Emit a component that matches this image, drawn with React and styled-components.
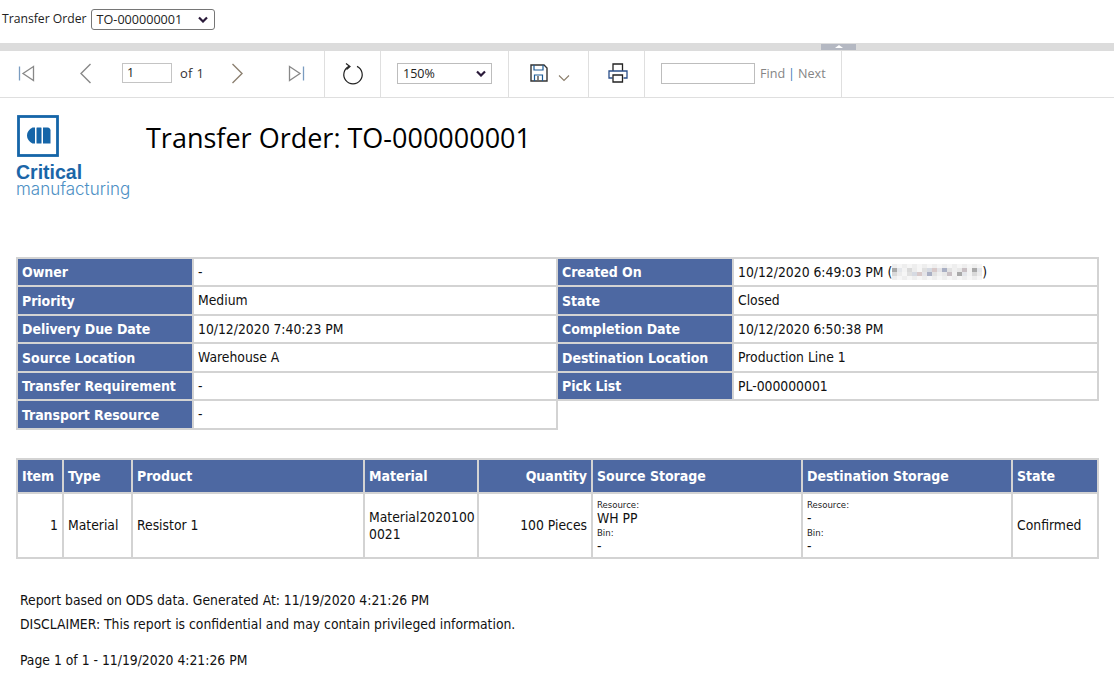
import React from "react";
import styled, { createGlobalStyle } from "styled-components";

const Global = createGlobalStyle`
  html, body { margin: 0; padding: 0; background: #fff; }
  body { font-family: "Open Sans", "Noto Sans", sans-serif; color: #000; }
`;
const Page = styled.div`width: 1114px; height: 698px; overflow: hidden; display: flex; flex-direction: column;`;
const ParamBar = styled.div`height: 43px; box-sizing: border-box; padding: 9px 0 0 2px; display: flex; align-items: flex-start; gap: 4px; font-size: 12.2px; color: #222;`;
const ParamLabel = styled.span`line-height: 20px;`;
const ParamSelect = styled.div`
  width: 124px; height: 21px; box-sizing: border-box; border: 1px solid #767676; border-radius: 3px;
  display: flex; align-items: center; justify-content: space-between; padding: 0 6px 0 5px; font-size: 12.6px;
`;
const Splitter = styled.div`height: 8px; background: #dcdcdc; position: relative; flex: none;`;
const Handle = styled.div`
  position: absolute; left: 821px; top: 1px; width: 35px; height: 6px; background: #b4b8c2;
  display: flex; justify-content: center; align-items: flex-start;
  &::after { content: ""; border-left: 4px solid transparent; border-right: 4px solid transparent; border-bottom: 3px solid #fff; margin-top: 1px; }
`;
const Toolbar = styled.div`height: 47px; box-sizing: border-box; border-bottom: 1px solid #dfdfdf; display: flex; flex: none; font-size: 12.5px; color: #333;`;
const Group = styled.div`
  width: ${p => p.$w}px; box-sizing: border-box; border-right: 1px solid #dfdfdf; position: relative;
  display: flex; align-items: center; padding-bottom: 2px;
  padding-left: ${p => p.$pl || 0}px; gap: ${p => p.$gap || 0}px;
`;
const PageInput = styled.div`width: 50px; height: 20px; box-sizing: border-box; border: 1px solid #c4c4c4; padding-left: 4px; line-height: 18px; color: #222;`;
const OfText = styled.span`color: #333; font-size: 13px; letter-spacing: .3px;`;
const ZoomSelect = styled.div`
  width: 95px; height: 21px; box-sizing: border-box; border: 1px solid #bdbdbd;
  display: flex; align-items: center; justify-content: space-between; padding: 0 5px 0 5px; font-size: 12.5px; color: #222;
`;
const FindInput = styled.div`width: 94px; height: 21px; box-sizing: border-box; border: 1px solid #bdbdbd;`;
const FindLinks = styled.span`color: #858585; font-size: 12.6px; display: flex; gap: 3px;`;
const Pipe = styled.span`color: #3a7ab8;`;
const Report = styled.div`flex: 1; position: relative; padding: 0 16px;`;
const Head = styled.div`height: 159px; display: flex; padding-top: 17px; box-sizing: border-box;`;
const Logo = styled.div`width: 130px; flex: none; display: flex; flex-direction: column; font-family: "Liberation Sans", sans-serif;`;
const LogoMark = styled.svg`display: block; margin-left: 1px; margin-bottom: 7px;`;
const LogoBold = styled.div`color: #1b66a8; font-weight: 700; font-size: 19.5px; line-height: 17px;`;
const LogoThin = styled.div`color: #4d8fc4; font-family: "Inter", sans-serif; font-weight: 300; font-size: 17px; line-height: 17px;`;
const Title = styled.h1`margin: 7px 0 0; font-family: "Open Sans", sans-serif; font-weight: 400; font-size: 27px; line-height: 32px; color: #000;`;
const Table = styled.table`
  border-collapse: collapse; table-layout: fixed; width: ${p => p.$w}px;
  font-family: "DejaVu Sans Condensed", "DejaVu Sans", sans-serif; font-size: 13.8px;
`;
const Label = styled.th`
  background: #4d68a2; color: #fff; border: 2px solid #d3d3d3; height: ${p => p.$h}px; padding: 0 4px;
  font-size: 14px; font-weight: 700; text-align: ${p => p.$right ? "right" : "left"};
  white-space: nowrap; overflow: hidden; letter-spacing: -.05px;
`;
const Cell = styled.td`
  border: 2px solid #d3d3d3; padding: 0 4px; height: ${p => p.$h}px; color: #111;
  text-align: ${p => p.$right ? "right" : "left"}; line-height: 17px;
`;
const BlankCell = styled.td`border: none; border-top: 2px solid #d3d3d3;`;
const ItemsWrap = styled.div`margin-top: 28px;`;
const Tiny = styled.div`font-size: 9.5px; line-height: 11px; color: #222;`;
const StoreVal = styled.div`font-size: 13.8px; line-height: 17px; color: #111;`;
const Stack = styled.div`padding: 4px 0 1px;`;
const Notes = styled.div`margin: 29px 0 0 4px; font-family: "DejaVu Sans Condensed", "DejaVu Sans", sans-serif; font-size: 13.8px; color: #111; line-height: 24px;`;
const PageNote = styled.div`margin-top: 12px;`;
const Redact = styled.svg`display: inline-block; vertical-align: -3px; margin: 0;`;

const Stroke = { fill: "none", stroke: "#888", strokeWidth: 1.3 };
const IconBox = styled.svg`display: block; flex: none; position: absolute; left: ${p => p.$x}px; top: ${p => p.$y}px;`;

const Chevron = () => (
  <svg width="10" height="7" viewBox="0 0 10 7"><path d="M1 1.5 5 5.5 9 1.5" fill="none" stroke="#2a1a3a" strokeWidth="2.2" /></svg>
);

const Blur = () => {
  const c = ["#e8e8e8","#c9c0c4","#f2f2f2","#a9a9a9","#e4e6ea","#f3f3f3","#d9d9d9","#ececec","#f6f6f6","#e0e0e0","#d6dae2","#d8c9c9","#e4e4e8","#aab0c4","#e2e2e2","#efefef"];
  const cells = [];
  for (let r = 0; r < 4; r++) for (let i = 0; i < 18; i++) {
    cells.push(<rect key={r + "-" + i} x={i * 5} y={r * 4} width="5" height="4" fill={r === 0 || r === 3 ? (i % 2 ? "#f6f6f6" : "#eeeeee") : c[(i + r * 3) % 16]} />);
  }
  return <Redact width="90" height="16" viewBox="0 0 90 16">{cells}</Redact>;
};

const details = [
  ["Owner", "-", "Created On", <>10/12/2020 6:49:03 PM (<Blur />)</>],
  ["Priority", "Medium", "State", "Closed"],
  ["Delivery Due Date", "10/12/2020 7:40:23 PM", "Completion Date", "10/12/2020 6:50:38 PM"],
  ["Source Location", "Warehouse A", "Destination Location", "Production Line 1"],
  ["Transfer Requirement", "-", "Pick List", "PL-000000001"],
];

const Storage = ({ value }) => (
  <Stack>
    <Tiny>Resource:</Tiny>
    <StoreVal>{value}</StoreVal>
    <Tiny>Bin:</Tiny>
    <StoreVal>-</StoreVal>
  </Stack>
);

export default function App() {
  return (
    <Page>
      <Global />
      <ParamBar>
        <ParamLabel>Transfer Order</ParamLabel>
        <ParamSelect>TO-000000001<Chevron /></ParamSelect>
      </ParamBar>
      <Splitter><Handle /></Splitter>
      <Toolbar>
        <Group $w={325} $pl={122} $gap={8}>
          <IconBox $x={18} $y={14} width="18" height="17" viewBox="0 0 18 17"><path d="M1.5 1.5v14" {...Stroke} stroke="#7a9cc0" /><path d="M15.5 1.5 5 8.5l10.5 7z" {...Stroke} /></IconBox>
          <IconBox $x={79} $y={12} width="13" height="21" viewBox="0 0 13 21"><path d="M11.5 1 2 10.5 11.5 20" {...Stroke} strokeWidth="1.4" /></IconBox>
          <PageInput>1</PageInput>
          <OfText>of 1</OfText>
          <IconBox $x={231} $y={12} width="13" height="21" viewBox="0 0 13 21"><path d="M1.5 1 11 10.5 1.5 20" {...Stroke} stroke="#8c8070" strokeWidth="1.4" /></IconBox>
          <IconBox $x={287} $y={14} width="18" height="17" viewBox="0 0 18 17"><path d="M2.5 1.5 13 8.5 2.5 15.5z" {...Stroke} /><path d="M16.5 1.5v14" {...Stroke} stroke="#7a9cc0" /></IconBox>
        </Group>
        <Group $w={56}>
          <IconBox $x={17} $y={11} width="22" height="23" viewBox="0 0 22 23"><path d="M7 4.4a9.2 9.2 0 1 0 8 0" fill="none" stroke="#222" strokeWidth="1.2" /><path d="M4 1.5 8 4.5 4.5 7.5" fill="none" stroke="#222" strokeWidth="1.2" /></IconBox>
        </Group>
        <Group $w={128} $pl={16}>
          <ZoomSelect>150%<Chevron /></ZoomSelect>
        </Group>
        <Group $w={80}>
          <IconBox $x={21} $y={13} width="18" height="18" viewBox="0 0 18 18"><path d="M1 1h13l3 3v13H1z" fill="none" stroke="#333" strokeWidth="1.4" /><path d="M4 1v5h9V1M4.5 17v-6h8v6" fill="none" stroke="#1c5b96" strokeWidth="1.2" /><path d="M8 12v4" stroke="#333" strokeWidth="1.2" /></IconBox>
          <IconBox $x={49} $y={23} width="12" height="8" viewBox="0 0 12 8"><path d="M1 1.5 6 6.5 11 1.5" fill="none" stroke="#8a7d6a" strokeWidth="1.1" /></IconBox>
        </Group>
        <Group $w={56}>
          <IconBox $x={19} $y={12} width="20" height="20" viewBox="0 0 20 20"><path d="M5 8V1h9.500v7" fill="none" stroke="#222" strokeWidth="1.300" /><path d="M4.500 15H1V8h18v7h-3.500" fill="none" stroke="#2a4f8a" strokeWidth="1.300" /><path d="M5 12h9.500v7H5z" fill="#fff" stroke="#222" strokeWidth="1.300" /></IconBox>
        </Group>
        <Group $w={197} $pl={16} $gap={5}>
          <FindInput />
          <FindLinks><span>Find</span><Pipe>|</Pipe><span>Next</span></FindLinks>
        </Group>
      </Toolbar>
      <Report>
        <Head>
          <Logo>
            <LogoMark width="42" height="42" viewBox="0 0 42 42">
              <rect x="1.500" y="1.500" width="39" height="39" fill="none" stroke="#1565a8" strokeWidth="2.800" />
              <path d="M15.500 12.500h2.500v16h-2.500c-3.500-2-5.500-4.500-5.500-8s2-6 5.500-8z" fill="#1565a8" />
              <rect x="19.500" y="12.500" width="5" height="16" rx=".5" fill="#1565a8" />
              <path d="M26 12.500h4.500c2 0 3 1.500 3 3v13H26z" fill="#1565a8" />
            </LogoMark>
            <LogoBold>Critical</LogoBold>
            <LogoThin>manufacturing</LogoThin>
          </Logo>
          <Title>Transfer Order: TO-000000001</Title>
        </Head>
        <Table $w={1081}>
          <colgroup><col width="176" /><col width="364" /><col width="176" /><col width="365" /></colgroup>
          <tbody>
            {details.map((r, i) => {
              const h = i % 2 ? 27 : 26;
              return (
                <tr key={r[0]}>
                  <Label $h={h}>{r[0]}</Label><Cell $h={h}>{r[1]}</Cell>
                  <Label $h={h}>{r[2]}</Label><Cell $h={h}>{r[3]}</Cell>
                </tr>
              );
            })}
            <tr>
              <Label $h={27}>Transport Resource</Label><Cell $h={27}>-</Cell>
              <BlankCell colSpan={2} />
            </tr>
          </tbody>
        </Table>
        <ItemsWrap>
          <Table $w={1081}>
            <colgroup>
              <col width="46" /><col width="69" /><col width="232" /><col width="114" /><col width="114" /><col width="210" /><col width="210" /><col width="86" />
            </colgroup>
            <thead>
              <tr>
                <Label $h={32}>Item</Label><Label $h={32}>Type</Label><Label $h={32}>Product</Label><Label $h={32}>Material</Label>
                <Label $h={32} $right>Quantity</Label><Label $h={32}>Source Storage</Label><Label $h={32}>Destination Storage</Label><Label $h={32}>State</Label>
              </tr>
            </thead>
            <tbody>
              <tr>
                <Cell $h={63} $right>1</Cell><Cell $h={63}>Material</Cell><Cell $h={63}>Resistor 1</Cell><Cell $h={63}>Material2020100<br />0021</Cell>
                <Cell $h={63} $right>100 Pieces</Cell><Cell $h={63}><Storage value="WH PP" /></Cell><Cell $h={63}><Storage value="-" /></Cell><Cell $h={63}>Confirmed</Cell>
              </tr>
            </tbody>
          </Table>
        </ItemsWrap>
        <Notes>
          <div>Report based on ODS data. Generated At: 11/19/2020 4:21:26 PM</div>
          <div>DISCLAIMER: This report is confidential and may contain privileged information.</div>
          <PageNote>Page 1 of 1 - 11/19/2020 4:21:26 PM</PageNote>
        </Notes>
      </Report>
    </Page>
  );
}
